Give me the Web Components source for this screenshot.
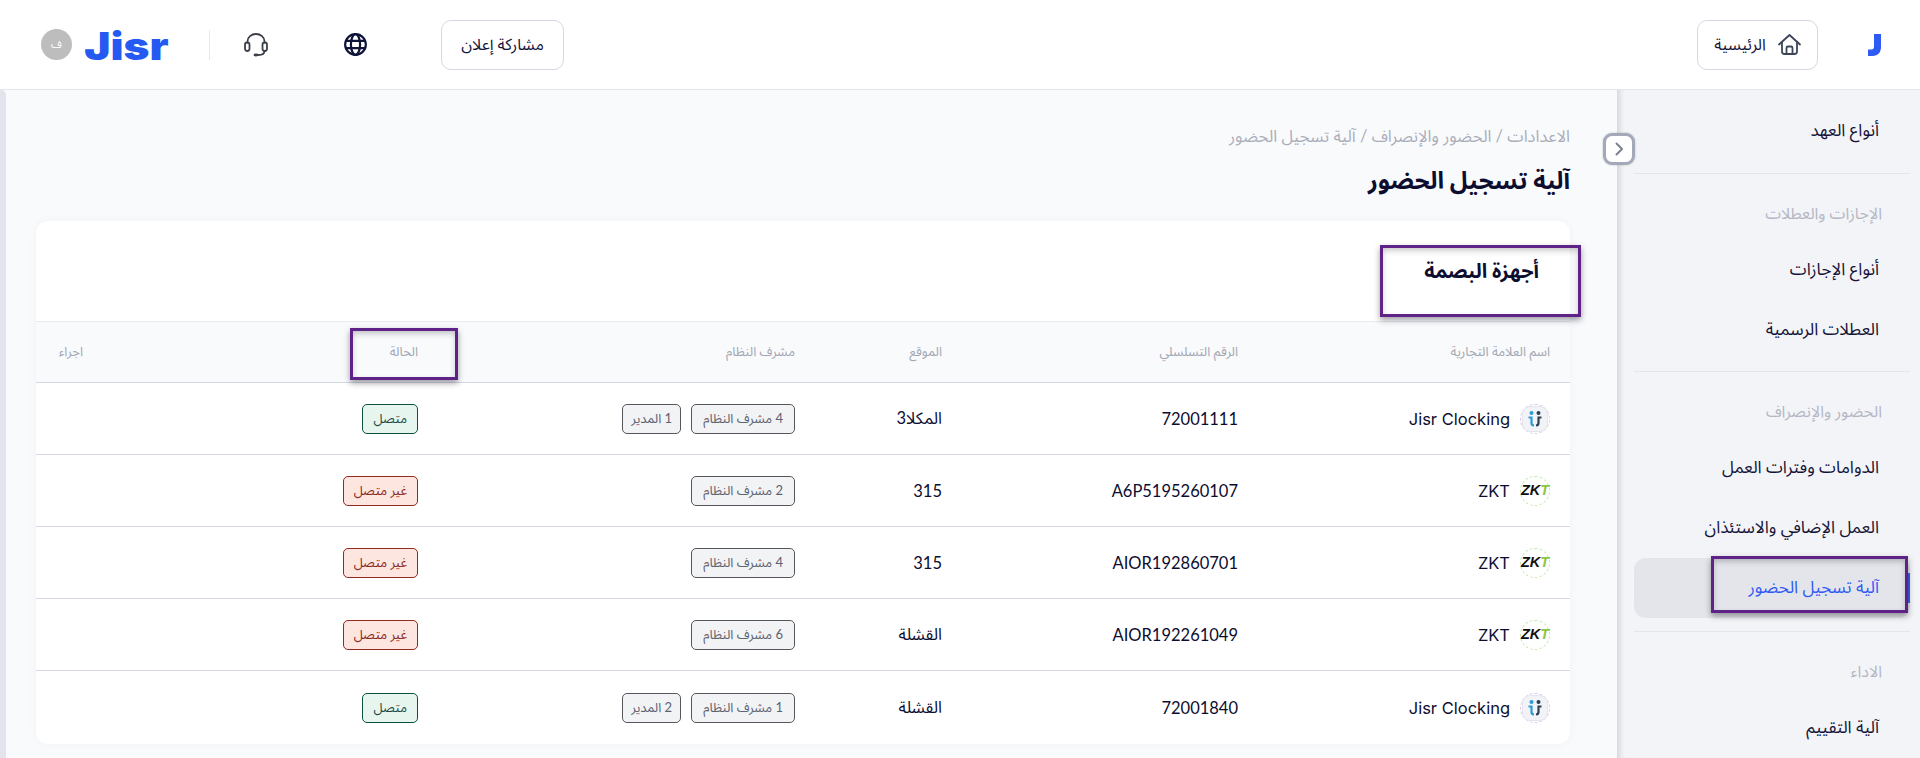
<!DOCTYPE html>
<html lang="ar" dir="rtl">
<head>
<meta charset="utf-8">
<title>آلية تسجيل الحضور</title>
<style>
  html, body { margin: 0; height: 100%; overflow: hidden; }
  body {
    font-family: Lato, "Noto Sans Arabic", "Noto Sans", "DejaVu Sans", sans-serif;
    color: #14143a;
    background: #f9fafc;
  }
</style>
</head>
<body>
<app-shell>
  <app-header slot="header"></app-header>

  <app-sidebar slot="sidebar">
    <nav-item>أنواع العهد</nav-item>
    <nav-divider style="--gap:12px"></nav-divider>
    <nav-section>الإجازات والعطلات</nav-section>
    <nav-item>أنواع الإجازات</nav-item>
    <nav-item>العطلات الرسمية</nav-item>
    <nav-divider style="--gap:11px"></nav-divider>
    <nav-section>الحضور والإنصراف</nav-section>
    <nav-item>الدوامات وفترات العمل</nav-item>
    <nav-item>العمل الإضافي والاستئذان</nav-item>
    <nav-item active>آلية تسجيل الحضور</nav-item>
    <nav-divider style="--gap:13px"></nav-divider>
    <nav-section>الاداء</nav-section>
    <nav-item>آلية التقييم</nav-item>
  </app-sidebar>

  <page-head slot="main"
    crumbs="الاعدادات / الحضور والإنصراف / آلية تسجيل الحضور"
    title-text="آلية تسجيل الحضور"></page-head>

  <device-card slot="main" heading="أجهزة البصمة">
    <device-row brand="jisr" serial="72001111" place="المكلا3" tags="4 مشرف النظام|1 المدير" online></device-row>
    <device-row brand="zkt" serial="A6P5195260107" place="315" tags="2 مشرف النظام"></device-row>
    <device-row brand="zkt" serial="AIOR192860701" place="315" tags="4 مشرف النظام"></device-row>
    <device-row brand="zkt" serial="AIOR192261049" place="القشلة" tags="6 مشرف النظام"></device-row>
    <device-row brand="jisr" serial="72001840" place="القشلة" tags="1 مشرف النظام|2 المدير" online last></device-row>
  </device-card>

  <!-- review marks drawn on top of the capture -->
  <mark-box slot="marks" style="--x:1380px;--y:245px;--w:201px;--h:72px"></mark-box>
  <mark-box slot="marks" style="--x:350px;--y:328px;--w:108px;--h:52px"></mark-box>
  <mark-box slot="marks" style="--x:1711px;--y:556px;--w:197px;--h:57px"></mark-box>
</app-shell>

<script>
/**
 * Base class: shadow root plus a setContent helper
 */
class BaseElement extends HTMLElement {
  constructor() {
    super();
    this.attachShadow({ mode: 'open' });
  }

  setContent(html, styles = '') {
    const template = document.createElement('template');
    template.innerHTML = `<style>${styles}</style>${html}`;
    this.shadowRoot.innerHTML = '';
    this.shadowRoot.appendChild(template.content.cloneNode(true));
  }
}

class AppShell extends BaseElement {
  connectedCallback() {
    this.setContent(`
      <slot name="header"></slot>
      <div class="body">
        <slot name="sidebar"></slot>
        <main><slot name="main"></slot></main>
        <div class="strip"></div>
      </div>
      <slot name="marks"></slot>
    `, `
      :host { display: flex; flex-direction: column; height: 758px; position: relative; overflow: hidden; }
      .body { flex: 1; display: flex; min-height: 0; }
      main { flex: 1; min-width: 0; padding: 0 0 0 30px; margin-right: 47px; }
      .strip { width: 6px; background: #e1e4ec; border-top-right-radius: 5px; }
    `);
  }
}

class AppHeader extends BaseElement {
  connectedCallback() {
    this.setContent(`
      <div class="side">
        <svg class="mark" width="13" height="22" viewBox="0 0 13 22" aria-hidden="true">
          <path d="M6 0H13V12.500C13 18.500 10 22 4.500 22H0V15.500H3.500C5.200 15.500 6 14.500 6 12.500Z" fill="#2f5bf5"/>
        </svg>
        <button class="pill home">
          <svg width="23" height="21" viewBox="0 0 23 21" fill="none" stroke="#3c4658" stroke-width="1.800" stroke-linejoin="round" stroke-linecap="round" aria-hidden="true">
            <path d="M1 10.500 11.500 1 22 10.500"/>
            <path d="M4 8v9.500A2.500 2.500 0 0 0 6.500 20h10a2.500 2.500 0 0 0 2.500-2.500V8"/>
            <path d="M8.500 20v-6a1.500 1.500 0 0 1 1.500-1.500h3a1.500 1.500 0 0 1 1.500 1.500v6"/>
          </svg>
          <span>الرئيسية</span>
        </button>
      </div>
      <div class="side tools">
        <button class="pill share"><span>مشاركة إعلان</span></button>
        <svg class="globe" width="23" height="23" viewBox="0 0 24 24" fill="none" stroke="#0e1338" stroke-width="2.300" aria-hidden="true">
          <circle cx="12" cy="12" r="10.800"/>
          <ellipse cx="12" cy="12" rx="4.800" ry="10.800"/>
          <path d="M2 8.300h20M2 15.700h20"/>
        </svg>
        <svg class="phones" width="24" height="24" viewBox="0 0 24 24" fill="none" stroke="#3c4048" stroke-width="1.800" stroke-linecap="round" aria-hidden="true">
          <path d="M3.500 9.500V8.500a8.500 7.500 0 0 1 17 0v1"/>
          <rect x="1" y="9.500" width="4.500" height="8.500" rx="2.200"/>
          <rect x="18.500" y="9.500" width="4.500" height="8.500" rx="2.200"/>
          <path d="M20.500 18c0 2.500-2.500 4-6 4"/>
          <ellipse cx="12" cy="22" rx="2.500" ry="1.400" fill="#3c4048" stroke="none"/>
        </svg>
        <span class="rule"></span>
        <span class="wordmark"><span dir="ltr">Jisr</span></span>
        <span class="avatar">ف</span>
      </div>
    `, `
      :host {
        display: flex; justify-content: space-between; align-items: center;
        height: 90px; box-sizing: border-box; border-bottom: 1px solid #e4e6ed;
        background: #fff; padding: 0 39px 0 41px; flex: none;
      }
      .side { display: flex; align-items: center; }
      .mark { margin-left: 50px; }
      .pill {
        height: 50px; box-sizing: border-box; display: flex; align-items: center; justify-content: center;
        background: #fff; border: 1px solid #d5d8e3; border-radius: 10px;
        font: 16px Lato, "Noto Sans Arabic", "Noto Sans", "DejaVu Sans", sans-serif; color: #14143a; padding: 0;
      }
      .home { width: 121px; gap: 12px; }
      .share { width: 123px; margin-left: 74px; }
      .globe { margin-left: 76px; }
      .phones { margin-left: 34px; }
      .rule { width: 1px; height: 30px; background: #e6e8ee; margin-left: 40px; }
      .wordmark {
        width: 85px; height: 30px; display: block; margin-left: 12px; color: #2459f2;
        font: 900 38px/30px Inter, Lato, sans-serif; text-align: center;
      }
      .wordmark span { display: inline-block; transform: translateY(1px) scaleX(1.160); transform-origin: center; }
      .avatar {
        width: 31px; height: 31px; border-radius: 50%; background: #bdbdbd; color: #fff;
        font-size: 11px; display: flex; align-items: center; justify-content: center;
      }
    `);
  }
}

class AppSidebar extends BaseElement {
  connectedCallback() {
    this.setContent(`
      <slot></slot>
      <button class="toggle" aria-label="طي القائمة">
        <svg width="14" height="14" viewBox="0 0 14 14" fill="none" stroke="#7c8290" stroke-width="2" stroke-linecap="round" stroke-linejoin="round" aria-hidden="true">
          <path d="M4.500 1.500 10 7l-5.500 5.500"/>
        </svg>
      </button>
    `, `
      :host {
        display: block; position: relative; width: 303px; box-sizing: border-box; flex: none;
        background: #f3f4f7; padding: 11px 10px 0 17px;
        box-shadow: inset 7px 0 6px -5px rgba(40, 44, 60, .18);
      }
      .toggle {
        position: absolute; left: -14px; top: 43px; width: 32px; height: 32px; box-sizing: border-box;
        background: #fff; border: 3px solid #a3a9b9; border-radius: 9px; padding: 0;
        display: flex; align-items: center; justify-content: center;
        box-shadow: 0 0 2px rgba(40, 44, 60, .3);
      }
    `);
  }
}

class NavItem extends BaseElement {
  connectedCallback() {
    this.setContent(`<slot></slot>`, `
      :host {
        display: flex; align-items: center; height: 60px; box-sizing: border-box;
        padding-right: 31px; font-size: 17px; color: #14143a; border-radius: 12px; position: relative;
      }
      :host([active]) { background: #e4e5ea; color: #2f5bf5; }
      :host([active])::before {
        content: ''; position: absolute; right: 0; top: 15px; width: 3px; height: 30px; background: #2f5bf5;
      }
    `);
  }
}

class NavSection extends BaseElement {
  connectedCallback() {
    this.setContent(`<slot></slot>`, `
      :host {
        display: flex; align-items: flex-start; height: 66px; box-sizing: border-box;
        padding: 28px 28px 0 0; font-size: 16px; line-height: 22px; color: #b4b7c5;
      }
    `);
  }
}

class NavDivider extends BaseElement {
  connectedCallback() {
    this.setContent(``, `
      :host { display: block; height: 1px; background: #e3e5eb; margin: var(--gap, 11px) 0 0; }
    `);
  }
}

class PageHead extends BaseElement {
  connectedCallback() {
    this.setContent(`
      <div class="crumbs">${this.getAttribute('crumbs')}</div>
      <h1>${this.getAttribute('title-text')}</h1>
    `, `
      :host { display: block; padding-top: 32px; height: 131px; box-sizing: border-box; }
      .crumbs { font-size: 16.500px; line-height: 28px; color: #aaaeba; }
      h1 { margin: 9px 0 0; font-size: 24px; line-height: 42px; font-weight: 700; color: #0d0d30; }
    `);
  }
}

const GRID = '312px 296px 147px 377px 335px 67px';

class DeviceCard extends BaseElement {
  connectedCallback() {
    const heads = ['اسم العلامة التجارية', 'الرقم التسلسلي', 'الموقع', 'مشرف النظام', 'الحالة', 'اجراء'];
    this.setContent(`
      <h2>${this.getAttribute('heading')}</h2>
      <div class="head">${heads.map((h) => `<span>${h}</span>`).join('')}</div>
      <slot></slot>
    `, `
      :host {
        display: block; width: 1534px; background: #fff; border-radius: 12px;
        box-shadow: 0 0 8px rgba(40, 44, 80, .04); overflow: hidden;
      }
      h2 { margin: 0; height: 100px; box-sizing: border-box; padding: 33px 31px 0 0; font-size: 20px; line-height: 32px; font-weight: 700; color: #0d0d30; }
      .head {
        display: grid; grid-template-columns: ${GRID}; align-items: center;
        height: 62px; box-sizing: border-box; background: #f9fafc;
        border-top: 1px solid #e8eaf0; border-bottom: 1px solid #d5d8e3;
        font-size: 13px; color: #a2a6b3;
      }
      .head span { padding-right: 20px; }
    `);
  }
}

class DeviceRow extends BaseElement {
  connectedCallback() {
    const tags = this.getAttribute('tags').split('|');
    const online = this.hasAttribute('online');
    this.setContent(`
      <div class="cell brand">
        <brand-logo kind="${this.getAttribute('brand')}"></brand-logo>
        <span class="name" dir="ltr">${this.getAttribute('brand') === 'zkt' ? 'ZKT' : 'Jisr Clocking'}</span>
      </div>
      <div class="cell">${this.getAttribute('serial')}</div>
      <div class="cell">${this.getAttribute('place')}</div>
      <div class="cell tags">${tags.map((t) => `<span class="tag">${t}</span>`).join('')}</div>
      <div class="cell"><span class="status ${online ? 'on' : 'off'}">${online ? 'متصل' : 'غير متصل'}</span></div>
      <div class="cell"></div>
    `, `
      :host {
        display: grid; grid-template-columns: ${GRID}; align-items: center;
        height: 72px; box-sizing: border-box; border-bottom: 1px solid #d5d8e3;
        font-size: 16.500px; color: #0d0d30;
      }
      :host([last]) { border-bottom: 0; height: 73px; }
      .cell { padding-right: 20px; display: flex; align-items: center; }
      .brand { gap: 10px; }
      .name { font-family: Inter, Lato, sans-serif; }
      .tags { gap: 10px; }
      .tag, .status {
        height: 30px; box-sizing: border-box; display: inline-flex; align-items: center;
        padding: 0 11px; border: 1px solid #55575c; border-radius: 5px;
        background: #f2f3f5; color: #5d6270; font-size: 13px; white-space: nowrap;
      }
      .tag:nth-child(2) { padding: 0 8px; }
      .status { padding: 0 10px; }
      .on { background: #e6f6ef; border-color: #0f5140; color: #1d4a4a; }
      .off { background: #fde5e0; border-color: #8f2b20; color: #8a2b20; }
    `);
  }
}

class BrandLogo extends BaseElement {
  connectedCallback() {
    const zkt = this.getAttribute('kind') === 'zkt';
    this.setContent(zkt
      ? `<div class="ring green"><span class="zk" dir="ltr">ZK<b>T</b></span></div>`
      : `<div class="ring violet"><div class="tile">
          <svg width="18" height="18" viewBox="0 0 18 18" fill="none" aria-hidden="true">
            <circle cx="5.500" cy="3" r="2" fill="#2d9ad8"/>
            <circle cx="12.500" cy="3" r="2" fill="#2b3f55"/>
            <path d="M2.500 7.500H5.500V13c0 1.500 1 2.500 2.500 2.500" stroke="#2d9ad8" stroke-width="2.200"/>
            <path d="M15.500 7.500H12.500V13c0 1.500-1 2.500-2.500 2.500" stroke="#2b3f55" stroke-width="2.200"/>
          </svg>
        </div></div>`, `
      :host { display: block; width: 30px; height: 30px; flex: none; }
      .ring {
        width: 30px; height: 30px; box-sizing: border-box; border-radius: 50%;
        display: flex; align-items: center; justify-content: center;
      }
      .green { border: 1px dashed #bfe8b0; }
      .violet { border: 1px dashed #dcc4ea; }
      .tile { width: 26px; height: 26px; box-sizing: border-box; border-radius: 8px; background: #f1f3f6; border: 1px solid #e3e5ea; display: flex; align-items: center; justify-content: center; }
      .zk { font: italic 700 14.500px/1 "Liberation Sans", sans-serif; color: #111; }
      .zk b { color: #8cc63f; font-weight: 700; }
    `);
  }
}

// purple review rectangles sitting over the capture
class MarkBox extends BaseElement {
  connectedCallback() {
    this.setContent(``, `
      :host {
        position: absolute; left: var(--x); top: var(--y); width: var(--w); height: var(--h);
        box-sizing: border-box; border: 3px solid #5f2388;
        box-shadow: 0 3px 6px rgba(40, 40, 50, .45), inset 0 3px 6px -1px rgba(40, 40, 50, .3);
        pointer-events: none;
      }
    `);
  }
}

customElements.define('app-shell', AppShell);
customElements.define('app-header', AppHeader);
customElements.define('app-sidebar', AppSidebar);
customElements.define('nav-item', NavItem);
customElements.define('nav-section', NavSection);
customElements.define('nav-divider', NavDivider);
customElements.define('page-head', PageHead);
customElements.define('device-card', DeviceCard);
customElements.define('device-row', DeviceRow);
customElements.define('brand-logo', BrandLogo);
customElements.define('mark-box', MarkBox);
</script>
</body>
</html>
